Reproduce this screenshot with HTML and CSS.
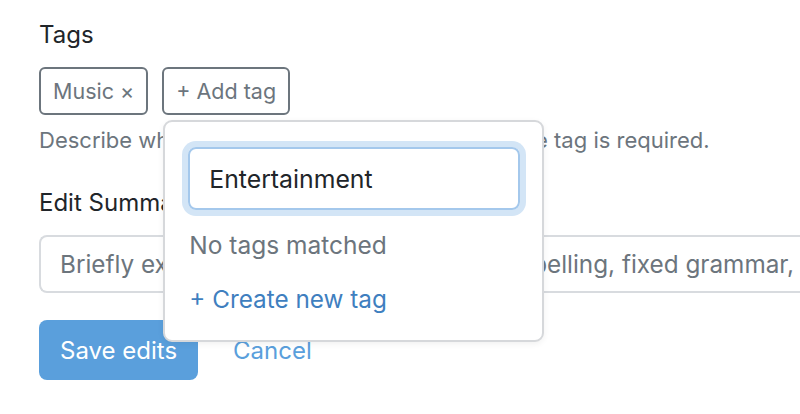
FILE: index.html
```html
<!DOCTYPE html>
<html>
<head>
<meta charset="utf-8">
<link rel="stylesheet" href="styles.css">
</head>
<body>
<div class="form">
  <div class="field">
    <div class="label">Tags</div>
    <div class="tags">
      <span class="tag">Music ×</span>
      <div class="add-wrap">
        <span class="tag">+ Add tag</span>
        <div class="popover">
          <div class="pop-input">Entertainment</div>
          <div class="pop-empty">No tags matched</div>
          <div class="pop-create">+ Create new tag</div>
        </div>
      </div>
    </div>
    <div class="help">Describe what the question is about. At least one tag is required.</div>
  </div>
  <div class="field summary">
    <div class="label">Edit Summary</div>
    <div class="input">Briefly explain your changes (corrected spelling, fixed grammar, improved formatting)</div>
  </div>
  <div class="actions">
    <span class="btn">Save edits</span>
    <span class="link">Cancel</span>
  </div>
</div>
</body>
</html>
```
FILE: styles.css
```css
html, body { margin: 0; padding: 0; background: #fff; }
body { font-family: Inter, "Liberation Sans", Arial, sans-serif; color: #212529; overflow: hidden; width: 800px; height: 414px; }
.form { padding: 20px 0 0 39px; }
.label { font-size: 24px; line-height: 30px; color: #212529; }
.tags { display: flex; gap: 14px; margin-top: 17px; }
.tag { display: inline-flex; align-items: center; box-sizing: border-box; height: 48px; padding: 0 12px; border: 2px solid #6c757d; border-radius: 6px; font-size: 21.5px; color: #6c757d; white-space: nowrap; }
.add-wrap { position: relative; }
.help { margin-top: 13px; font-size: 22px; line-height: 24px; color: #6c757d; white-space: nowrap; }
.summary { margin-top: 36px; }
.input { box-sizing: border-box; margin-top: 17px; height: 58px; width: 800px; border: 2px solid #d8dbdf; border-right: none; border-radius: 8px 0 0 8px; padding: 0 0 0 19px; display: flex; align-items: center; font-size: 24.3px; color: #6c757d; white-space: nowrap; overflow: hidden; }
.actions { display: flex; align-items: center; gap: 35px; margin-top: 27px; }
.btn { display: inline-flex; align-items: center; box-sizing: border-box; height: 60px; padding: 0 21px; background: #5a9fdc; color: #fff; border-radius: 8px; font-size: 24px; }
.link { color: #5a9fdc; font-size: 24px; }
.popover { position: absolute; left: 1px; top: 53px; box-sizing: border-box; width: 381px; height: 222px; background: #fff; border: 2px solid #d6d8db; border-radius: 9px; box-shadow: 0 2px 6px rgba(0,0,0,0.06); padding: 25px 22px 0 23px; }
.pop-input { box-sizing: border-box; height: 63px; border: 2px solid #a4c8ec; border-radius: 8px; box-shadow: 0 0 0 6px #d3e5f6; padding-left: 19px; display: flex; align-items: center; font-size: 24.8px; color: #212529; }
.pop-empty { margin-top: 20px; font-size: 24.5px; line-height: 30px; color: #6c757d; padding-left: 1px; }
.pop-create { margin-top: 24px; font-size: 24.3px; line-height: 30px; color: #3f7fbf; padding-left: 1px; }
```
